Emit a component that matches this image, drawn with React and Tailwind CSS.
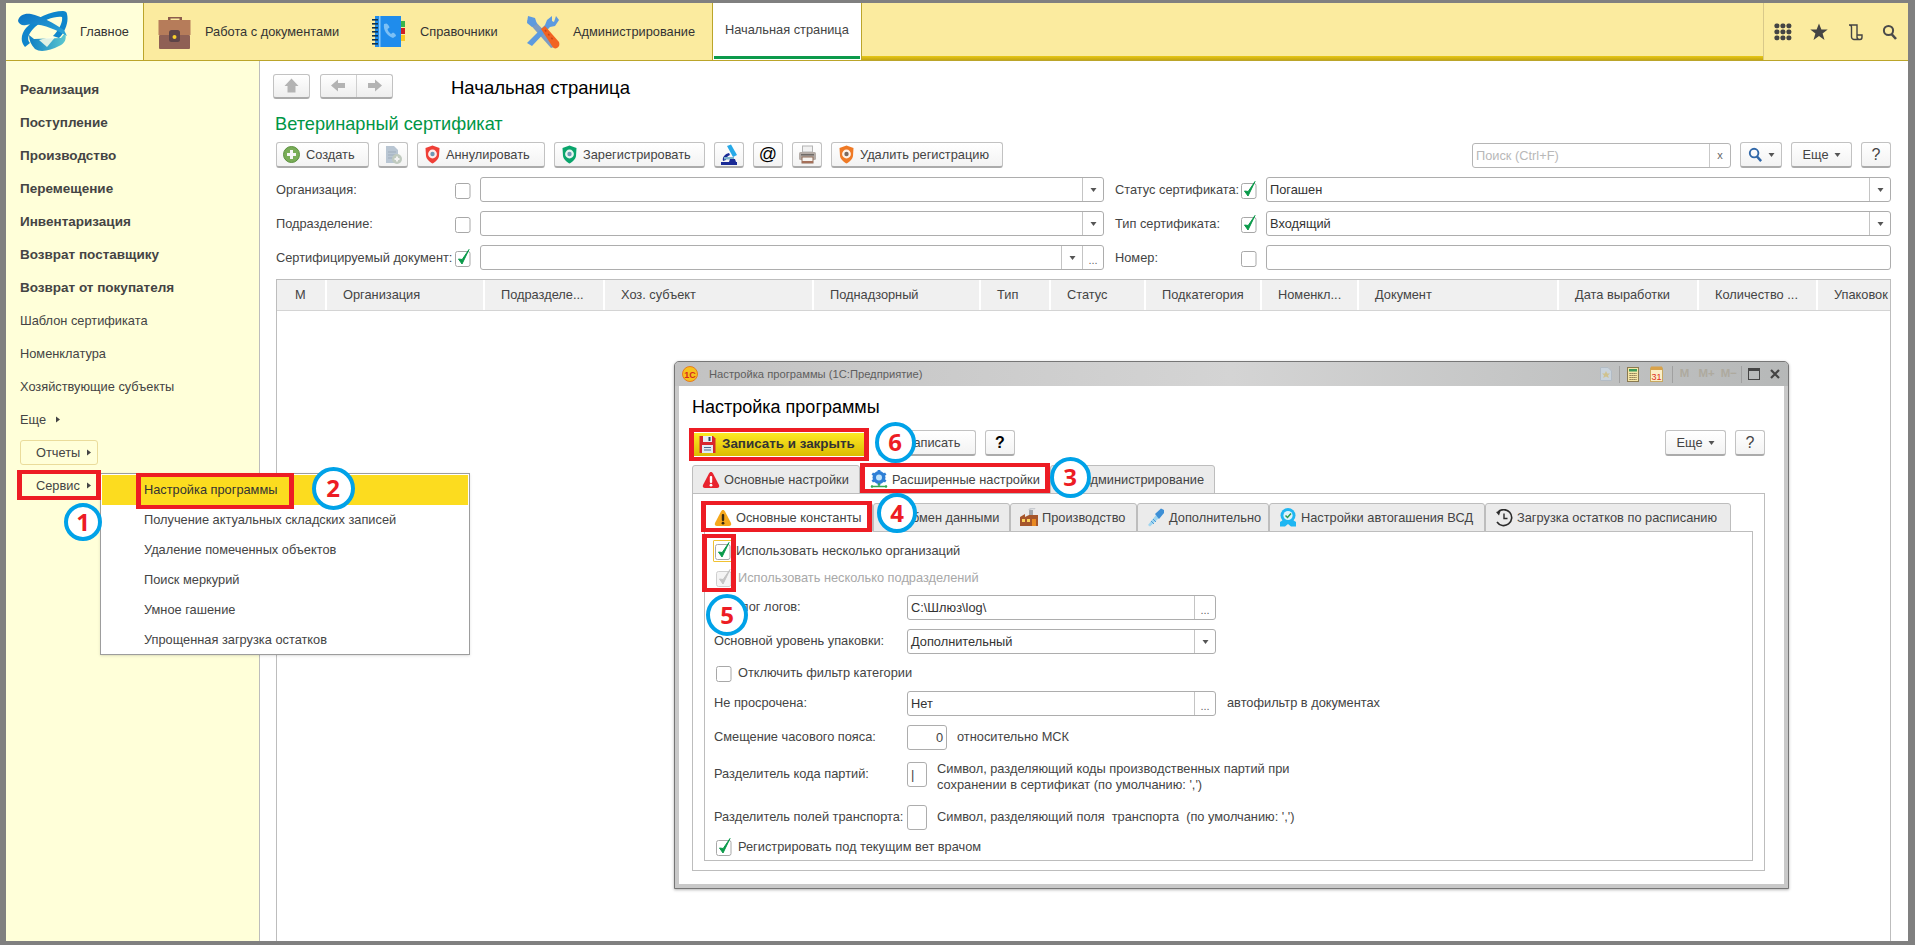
import React from "react";

const Chk = ({ on, dim, className = "" }) => (
  <svg width="17" height="20" viewBox="0 0 17 20" className={`shrink-0 ${className}`}>
    <rect x="0.5" y="3.5" width="14.5" height="15" rx="2" fill={dim ? "#f4f4f4" : "#fff"} stroke={dim ? "#cfcfcf" : "#a8a8a8"} />
    {on && <path d="M3.5 11 L7 16 L14 1.5 L7.2 11.5 Z" fill={dim ? "#c4c4c4" : "#0a9a4a"} stroke={dim ? "#c4c4c4" : "#0a9a4a"} strokeWidth="1" />}
  </svg>
);

const Arrow = ({ dir = "down", className = "" }) => (
  <svg width="7" height="7" viewBox="0 0 7 7" className={`shrink-0 ${className}`}>
    {dir === "down" ? <path d="M0.5 2 H6.5 L3.5 6 Z" fill="#555" /> : <path d="M2 0.5 V6.5 L6 3.5 Z" fill="#444" />}
  </svg>
);

const Field = ({ w, value, btns = [], className = "" }) => (
  <div className={`flex h-[25px] items-stretch rounded-[3px] border border-[#adadad] bg-white ${w || "flex-1"} ${className}`}>
    <div className="flex-1 min-w-0 pl-[3px] leading-[23px] text-[#333] truncate">{value}</div>
    {btns.map((b, i) => (
      <div key={i} className="flex w-[21px] items-center justify-center border-l border-[#c4c4c4]">
        {b === "drop" ? <Arrow /> : <span className="text-[11px] leading-none pt-[5px] text-[#666]">...</span>}
      </div>
    ))}
  </div>
);

const Btn = ({ children, className = "" }) => (
  <div className={`flex h-[26px] shrink-0 items-center rounded-[3px] border border-[#c2c2c2] border-b-2 border-b-[#ababab] bg-linear-to-b from-white to-[#f3f3f3] text-[#444] ${className}`}>
    {children}
  </div>
);

const Shield = ({ c1, c2 }) => (
  <svg width="17" height="19" viewBox="0 0 17 19" className="shrink-0">
    <path d="M8.5 0.5 L15.5 3 L15 11 C14.5 14.5 11 17 8.5 18.5 C6 17 2.5 14.5 2 11 L1.5 3 Z" fill={c1} />
    <circle cx="8.5" cy="9" r="4.4" fill="#fff" opacity="0.9" />
    <circle cx="8.5" cy="9" r="2.2" fill={c2} />
  </svg>
);

const Logo = () => (
  <svg width="50" height="44" viewBox="1 3 50 42" className="shrink-0">
    <defs>
      <linearGradient id="lg" x1="0" y1="0" x2="1" y2="1">
        <stop offset="0" stopColor="#0a72c4" />
        <stop offset="1" stopColor="#2ea8d8" />
      </linearGradient>
      <linearGradient id="lt" x1="0" y1="0" x2="1" y2="0">
        <stop offset="0" stopColor="#0f7fc4" />
        <stop offset="1" stopColor="#5cc8cf" />
      </linearGradient>
    </defs>
    <path d="M12 27 L17 31 L44 30 L48 25 C50 30 48 36 42 38 C34 42 24 45 18 41 C14 37 12 32 12 27 Z" fill="url(#lt)" />
    <path d="M22 32 L40 27 L30 39 Z" fill="#ffffe8" opacity="0.85" />
    <path d="M46 3 C34 3 18 10 9 20 C4 26 3 34 8 39 L13 35 C9 31 12 25 18 19 C26 12 38 8 45 9 C46 14 42 22 36 28 L42 30 C48 24 52 14 50 6 C50 4 48 3 46 3 Z" fill="#0f86cc" />
    <path d="M1 13 C2 7 8 5 14 6 C24 8 38 16 47 22 L50 28 C40 22 22 14 9 17 C5 18 2 16 1 13 Z" fill="url(#lg)" />
  </svg>
);

const Brief = () => (
  <svg width="33" height="34" viewBox="0 0 33 34" className="shrink-0">
    <path d="M10 5 V2 H12 H21 H24 V5 H21.5 V3.6 H12.5 V5 Z" fill="#8c5d4d" />
    <rect x="0.5" y="5" width="32" height="15" fill="#b67c5a" />
    <rect x="1" y="20" width="31" height="14" rx="1" fill="#8f6055" />
    <rect x="11" y="15" width="11" height="12" rx="2.5" fill="#5d4448" />
    <circle cx="16.5" cy="22" r="2" fill="#f7cf2d" />
  </svg>
);

const Book = () => (
  <svg width="33" height="33" viewBox="0 0 33 33" className="shrink-0">
    <rect x="3" y="1" width="26" height="31" fill="#1f8cec" />
    <rect x="7" y="1" width="1.5" height="31" fill="#8cc9f7" />
    {[4, 8, 12, 16, 20, 24, 28].map((y) => <rect key={y} x="0" y={y} width="6" height="1.6" fill="#11344e" />)}
    <rect x="29" y="6" width="4" height="6" fill="#39b54a" />
    <rect x="29" y="13" width="4" height="6" fill="#cf1f25" />
    <rect x="29" y="20" width="4" height="6" fill="#fbc822" />
    <path d="M12 9 C11 15 15 21 21 23 L24 21 C24 19 22 18 21 17.5 L19 19 C17 17.5 16 16 15.5 14 L17.5 12.5 C17 11 16 9 14.5 8.5 Z" fill="#7cc0f5" />
  </svg>
);

const Tools = () => (
  <svg width="34" height="34" viewBox="0 0 34 34" className="shrink-0">
    <path d="M1 6 L5 2 L30 28 L28 32 L25 33 Z" fill="#7c9cc4" />
    <path d="M2 1 L9 3 L11 9 L6 12 L1 8 Z" fill="#5d9adf" />
    <path d="M30 1 L33 5 L29 11 L24 12 L6 31 L1 28 L19 10 L21 5 L26 1 L26 6 L28 7 Z" fill="#5d9adf" />
    <path d="M15 14 L19 11 L33 27 C34 30 33 32 31 33 C29 34 27 33 26 31 Z" fill="#f26322" />
    <path d="M19 15 L28 26" stroke="#c8461a" strokeWidth="1.5" strokeDasharray="2 3" />
  </svg>
);

const Plus = ({ dim }) => (
  <svg width="17" height="17" viewBox="0 0 17 17" className="shrink-0">
    <circle cx="8.5" cy="8.5" r="8" fill={dim ? "#c2ccc2" : "#79ad57"} stroke={dim ? "#b2bab2" : "#5c9040"} />
    <path d="M7 4 H10 V7 H13 V10 H10 V13 H7 V10 H4 V7 H7 Z" fill="#f6f6f6" />
  </svg>
);

const DocAdd = () => (
  <svg width="20" height="20" viewBox="0 0 20 20" className="shrink-0">
    <path d="M3 1 H11 L15 5 V18 H3 Z" fill="#b9c6d3" />
    <path d="M5 7 H13 M5 10 H13 M5 13 H11" stroke="#9fadbc" />
    <circle cx="14" cy="14" r="5" fill="#c0cabf" />
    <path d="M13 11.5 H15 V13 H16.5 V15 H15 V16.5 H13 V15 H11.5 V13 H13 Z" fill="#f2f2f2" />
  </svg>
);

const Micro = () => (
  <svg width="22" height="22" viewBox="0 0 22 22" className="shrink-0">
    <path d="M9 2 L13 0.5 L19 11 L15 13 Z" fill="#26a9e8" />
    <path d="M5 17 C4 13 7 10 11 9 L12 11 C9 12 8 14 8 16 Z" fill="#1a2b96" />
    <rect x="6" y="13" width="10" height="2.5" fill="#7cb2cc" />
    <path d="M3 18 H19 V21 H3 Z" fill="#1a2b96" />
    <path d="M12 15 L17 15 L18 18 H11 Z" fill="#1a2b96" />
  </svg>
);

const Printer = () => (
  <svg width="19" height="19" viewBox="0 0 19 19" className="shrink-0">
    <rect x="4.5" y="1" width="10" height="6" fill="#f1f1f1" stroke="#b4b4b4" />
    <rect x="1" y="7" width="17" height="8" rx="1.5" fill="#b3aba6" />
    <rect x="3" y="9" width="13" height="1.5" fill="#6f6a66" />
    <rect x="4" y="12" width="11" height="6" fill="#f7f4f0" stroke="#8f6c58" />
    <rect x="4" y="16" width="11" height="2" fill="#a5705a" />
  </svg>
);

const HomeIco = () => (
  <svg width="15" height="15" viewBox="0 0 15 15">
    <path d="M7.5 0.5 L14.5 8 H11.5 V14.5 H3.5 V8 H0.5 Z" fill="#b3b3b3" />
  </svg>
);

const ArrowIco = ({ right }) => (
  <svg width="15" height="13" viewBox="0 0 15 13">
    {right ? <path d="M15 6.5 L8 0.5 V4 H1 V9 H8 V12.5 Z" fill="#b3b3b3" /> : <path d="M0 6.5 L7 0.5 V4 H14 V9 H7 V12.5 Z" fill="#b3b3b3" />}
  </svg>
);

const Search = ({ c = "#4a4a4a", s = 16 }) => (
  <svg width={s} height={s} viewBox="0 0 16 16" className="shrink-0">
    <circle cx="6.5" cy="6.5" r="4.6" fill="none" stroke={c} strokeWidth="2" />
    <path d="M9.5 10 L14 15" stroke={c} strokeWidth="2.6" />
  </svg>
);

const Warn = ({ c = "#e8232e", mark = "#fff" }) => (
  <svg width="18" height="18" viewBox="0 0 18 18" className="shrink-0">
    <path d="M9 1 C10 1 10.5 1.6 11 2.5 L17 14 C17.7 15.6 17 17 15 17 H3 C1 17 0.3 15.6 1 14 L7 2.5 C7.5 1.6 8 1 9 1 Z" fill={c} />
    <rect x="7.8" y="5" width="2.4" height="7" rx="1" fill={mark} />
    <circle cx="9" cy="14.2" r="1.4" fill={mark} />
  </svg>
);

const Gear = () => (
  <svg width="18" height="19" viewBox="0 0 18 19" className="shrink-0">
    <circle cx="9" cy="7.5" r="6.5" fill="#2f7fd6" />
    {[0, 60, 120, 180, 240, 300].map((a) => <rect key={a} x="7.6" y="-0.3" width="2.8" height="4" fill="#2f7fd6" transform={`rotate(${a} 9 7.5)`} />)}
    <circle cx="9" cy="7.5" r="3" fill="#bfe2fb" />
    <path d="M1 16.5 H17 M9 13 V17" stroke="#35a853" strokeWidth="1.4" />
    <circle cx="2" cy="16.5" r="1.2" fill="#35a853" /><circle cx="16" cy="16.5" r="1.2" fill="#35a853" />
  </svg>
);

const Factory = () => (
  <svg width="18" height="19" viewBox="0 0 18 19" className="shrink-0">
    <rect x="9" y="2" width="4" height="9" fill="#a3a8ad" />
    <path d="M9 2 C10 0 14 0 15 1" stroke="#c8cbd0" strokeWidth="1.6" fill="none" />
    <path d="M0 9 L5 6 V9 L9 7 H18 V18 H0 Z" fill="#a6562b" />
    <rect x="2" y="11" width="3" height="3" fill="#fbd15b" /><rect x="7" y="11" width="3" height="3" fill="#fbd15b" /><rect x="12" y="11" width="4" height="7" fill="#e98a22" />
  </svg>
);

const Drill = () => (
  <svg width="18" height="19" viewBox="0 0 18 19" className="shrink-0">
    <path d="M1 17 L9 7 L12 10 L3 18.5 Z" fill="#9fd5f0" />
    <path d="M8 6 L14 0.5 L17 2 L17 5 L12 11 Z" fill="#3d8fd6" />
    <path d="M4 13 L7 16 M6 11 L9 14" stroke="#4d9bd6" />
  </svg>
);

const Auto = () => (
  <svg width="18" height="19" viewBox="0 0 18 19" className="shrink-0">
    <circle cx="9" cy="7.5" r="7.5" fill="#1fb6f2" />
    <circle cx="9" cy="7.5" r="4.6" fill="#dff3fc" />
    <path d="M6.5 7.5 L8.5 9.5 L12 5.5" stroke="#2b9b4c" strokeWidth="1.5" fill="none" />
    <path d="M1 14 L4 12 H14 L17 14 V18.5 H12 L9 16 L6 18.5 H1 Z" fill="#1fb6f2" />
  </svg>
);

const Clock = () => (
  <svg width="18" height="18" viewBox="0 0 18 18" className="shrink-0">
    <path d="M3 3 A8 8 0 1 1 2 13" stroke="#2b2b2b" strokeWidth="1.6" fill="none" />
    <path d="M1 3 L5.5 2 L4 6.5 Z" fill="#2b2b2b" />
    <path d="M9 4.5 V9.5 H12.5" stroke="#2b2b2b" strokeWidth="1.4" fill="none" />
  </svg>
);

const Floppy = () => (
  <svg width="17" height="19" viewBox="0 0 17 19" className="shrink-0">
    <path d="M0.5 1 H14 L16.5 3.5 V18 H0.5 Z" fill="#d8262e" />
    <rect x="4" y="1" width="9" height="6" fill="#e9eef5" />
    <rect x="9.5" y="2" width="2" height="4" fill="#23435f" />
    <rect x="3" y="10" width="11" height="8" fill="#e3ebf4" />
    <path d="M5 12.5 H12 M5 15 H12" stroke="#4a6b8e" />
  </svg>
);

const Circle = ({ n, x, y, d = 40 }) => (
  <div
    className="absolute z-20 flex items-center justify-center rounded-full border-[4px] border-[#00a2e8] bg-white font-bold text-[#ed1c24] text-[24px] leading-none"
    style={{ left: x - d / 2 - 6, top: y - d / 2 - 3, width: d, height: d, fontFamily: '"Open Sans","Noto Sans",sans-serif' }}
  >
    {n}
  </div>
);

const RedBox = ({ x, y, x2, y2 }) => (
  <div
    className="absolute z-20 border-x-[5px] border-y-[4px] border-[#ed1c24] pointer-events-none"
    style={{ left: x - 6, top: y - 3, width: x2 - x, height: y2 - y }}
  />
);

const cols = [
  ["М", 50, 18], ["Организация", 158], ["Подразделе...", 120], ["Хоз. субъект", 209], ["Поднадзорный", 167], ["Тип", 70], ["Статус", 95],
  ["Подкатегория", 116], ["Номенкл...", 97], ["Документ", 200], ["Дата выработки", 140], ["Количество ...", 119], ["Упаковок", 74],
];

const side = ["Реализация", "Поступление", "Производство", "Перемещение", "Инвентаризация", "Возврат поставщику", "Возврат от покупателя"];
const side2 = ["Шаблон сертификата", "Номенклатура", "Хозяйствующие субъекты"];
const menu = ["Настройка программы", "Получение актуальных складских записей", "Удаление помеченных объектов", "Поиск меркурий", "Умное гашение", "Упрощенная загрузка остатков"];

const Tab = ({ icon, label, w, active }) => (
  <div
    className={`flex h-[29px] shrink-0 items-center gap-[4px] border border-[#bdbdbd] rounded-t-[3px] pl-[9px] ${active ? "bg-white border-b-white" : "bg-[#ebebeb]"}`}
    style={{ width: w }}
  >
    {icon}
    <span className="whitespace-nowrap">{label}</span>
  </div>
);

const FormRow = ({ label, children, className = "" }) => (
  <div className={`flex items-center pl-[9px] ${className}`}>
    <div className="w-[193px] shrink-0 whitespace-nowrap">{label}</div>
    {children}
  </div>
);

export default function App() {
  return (
    <div
      className="relative h-[945px] w-full overflow-hidden border-t-[3px] border-l-[6px] border-r-[7px] border-b-[4px] border-[#808080] bg-white text-[12.8px] text-[#444]"
      style={{ fontFamily: '"Liberation Sans",Arial,sans-serif' }}
    >
      <div className="flex h-full flex-col">
        {/* top bar */}
        <header className="flex h-[58px] shrink-0 border-b border-[#bba52a] bg-[#fbeb9f] text-[#333]">
          <div className="flex w-[138px] shrink-0 items-center gap-[12px] border-r border-[#bba52a] bg-[#ffffd9] pl-[12px]">
            <Logo />
            <span>Главное</span>
          </div>
          <div className="flex w-[228px] shrink-0 items-center gap-[14px] pl-[14px]"><Brief /><span className="whitespace-nowrap">Работа с документами</span></div>
          <div className="flex w-[154px] shrink-0 items-center gap-[15px]"><Book /><span>Справочники</span></div>
          <div className="flex w-[186px] shrink-0 items-center gap-[13px]"><Tools /><span>Администрирование</span></div>
          <div className="flex w-[150px] shrink-0 flex-col border-x border-[#bba52a] bg-white pl-[12px] pr-0">
            <div className="flex-1 flex items-center pt-[1px] whitespace-nowrap text-[#444]">Начальная страница</div>
            <div className="-ml-[11px] mr-[1px] h-[3px] bg-[#0c9a4b] mb-[1px]" />
          </div>
          <div className="flex flex-1 flex-col justify-end">
            <div className="h-[4px] bg-linear-to-b from-[#e8c816] to-[#c4a614]" />
          </div>
          <div className="flex w-[145px] shrink-0 items-center gap-[18px] border-l border-[#d8c88a] pl-[10px]">
            <svg width="18" height="18" viewBox="0 0 18 18" className="shrink-0">
              {[0, 6, 12].map((x) => [0, 6, 12].map((y) => <rect key={`${x}${y}`} x={x + 0.5} y={y + 0.5} width="4.8" height="4.8" rx="1.8" fill="#444" />))}
            </svg>
            <svg width="18" height="18" viewBox="0 0 18 18" className="shrink-0"><path d="M9 0.5 L11.4 6.5 H17.7 L12.6 10.4 L14.5 17 L9 13 L3.5 17 L5.4 10.4 L0.3 6.5 H6.6 Z" fill="#444" /></svg>
            <svg width="18" height="18" viewBox="0 0 18 18" className="shrink-0" fill="none" stroke="#444" strokeWidth="1.4"><path d="M3 2 C4.5 2 5.5 3 5.5 4 V14 C5.5 15.5 7 16.5 8 16.5 H14 C15.5 16.5 16 15.5 16 14 V12 H11 V2 H3 Z M11 12 V14 C11 15.5 12 16.5 13.5 16.5" /></svg>
            <Search />
          </div>
        </header>

        <div className="flex min-h-0 flex-1">
          {/* sidebar */}
          <aside className="w-[254px] shrink-0 border-r border-[#bdbdbd] bg-[#ffffd9] pt-[12px] pl-[14px] text-[#444]">
            {side.map((s) => <div key={s} className="h-[33px] leading-[33px] text-[13.5px] font-bold">{s}</div>)}
            {side2.map((s) => <div key={s} className="h-[33px] leading-[33px]">{s}</div>)}
            <div className="flex h-[33px] items-center gap-[8px]">Еще <Arrow dir="right" /></div>
            <div className="mt-[4px] flex h-[25px] w-[78px] items-center gap-[5px] rounded-[3px] border border-[#eadc9b] pl-[15px]">Отчеты <Arrow dir="right" /></div>
            <div className="mt-[8px] flex h-[25px] w-[78px] items-center gap-[5px] pl-[16px]">Сервис <Arrow dir="right" /></div>
          </aside>

          {/* main */}
          <main className="flex min-w-0 flex-1 flex-col pl-[16px] pr-[17px]">
            <div className="mt-[13px] flex h-[24px] shrink-0 items-center -ml-[3px]">
              <div className="flex h-[25px] w-[37px] items-center justify-center rounded-[3px] border border-[#c2c2c2] border-b-2 border-b-[#ababab] bg-linear-to-b from-white to-[#eeeeee]"><HomeIco /></div>
              <div className="ml-[10px] flex h-[25px] w-[73px] rounded-[3px] border border-[#c2c2c2] border-b-2 border-b-[#ababab] bg-linear-to-b from-white to-[#eeeeee]">
                <div className="flex flex-1 items-center justify-center border-r border-[#cfcfcf]"><ArrowIco /></div>
                <div className="flex flex-1 items-center justify-center"><ArrowIco right /></div>
              </div>
              <div className="ml-[58px] pt-[3px] text-[18.5px] text-black whitespace-nowrap">Начальная страница</div>
            </div>
            <div className="mt-[14px] h-[24px] shrink-0 text-[18.2px] leading-[24px] text-[#009646] -ml-[1px]">Ветеринарный сертификат</div>

            <div className="mt-[6px] flex h-[26px] shrink-0 items-center gap-[9px]">
              <Btn className="w-[93px] gap-[6px] pl-[6px]"><Plus />Создать</Btn>
              <Btn className="w-[30px] justify-center"><DocAdd /></Btn>
              <Btn className="w-[128px] gap-[5px] pl-[6px]"><Shield c1="#ef3f37" c2="#6f97b4" />Аннулировать</Btn>
              <Btn className="w-[151px] gap-[5px] pl-[6px]"><Shield c1="#0aa56c" c2="#6f97b4" />Зарегистрировать</Btn>
              <Btn className="w-[30px] justify-center"><Micro /></Btn>
              <Btn className="w-[30px] justify-center text-[18px] text-black">@</Btn>
              <Btn className="w-[30px] justify-center"><Printer /></Btn>
              <Btn className="w-[172px] gap-[5px] pl-[6px]"><Shield c1="#ef7a26" c2="#7a6a60" />Удалить регистрацию</Btn>
              <div className="flex-1" />
              <div className="flex h-[25px] w-[259px] rounded-[3px] border border-[#b5b5b5]">
                <div className="flex-1 pl-[3px] leading-[23px] text-[#b8b8b8]">Поиск (Ctrl+F)</div>
                <div className="flex w-[21px] items-center justify-center border-l border-[#c9c9c9] text-[11px] text-[#666]">x</div>
              </div>
              <Btn className="w-[42px] justify-center gap-[5px]"><Search c="#3067a8" s={15} /><Arrow /></Btn>
              <Btn className="w-[61px] justify-center gap-[5px]">Еще <Arrow /></Btn>
              <Btn className="w-[30px] justify-center text-[16px]">?</Btn>
            </div>

            <div className="mt-[9px] flex shrink-0 flex-col gap-[9px]">
              <div className="flex items-center">
                <div className="w-[179px] shrink-0">Организация:</div><Chk /><div className="w-[8px]" />
                <Field w="w-[624px]" btns={["drop"]} />
                <div className="ml-[11px] w-[126px] shrink-0 whitespace-nowrap">Статус сертификата:</div><Chk on /><div className="w-[8px]" />
                <Field value="Погашен" btns={["drop"]} />
              </div>
              <div className="flex items-center">
                <div className="w-[179px] shrink-0">Подразделение:</div><Chk /><div className="w-[8px]" />
                <Field w="w-[624px]" btns={["drop"]} />
                <div className="ml-[11px] w-[126px] shrink-0 whitespace-nowrap">Тип сертификата:</div><Chk on /><div className="w-[8px]" />
                <Field value="Входящий" btns={["drop"]} />
              </div>
              <div className="flex items-center">
                <div className="w-[179px] shrink-0 whitespace-nowrap">Сертифицируемый документ:</div><Chk on /><div className="w-[8px]" />
                <Field w="w-[624px]" btns={["drop", "dots"]} />
                <div className="ml-[11px] w-[126px] shrink-0">Номер:</div><Chk /><div className="w-[8px]" />
                <Field />
              </div>
            </div>

            <div className="mt-[9px] flex min-h-0 flex-1 flex-col border-x border-t border-[#bdbdbd]">
              <div className="flex h-[31px] shrink-0 border-b border-[#d4d4d4] bg-[#f0f0f0]">
                {cols.map(([t, w, p], i) => (
                  <div key={t} className={`flex shrink-0 items-center overflow-hidden whitespace-nowrap ${i < cols.length - 1 ? "border-r-2 border-white" : ""}`} style={{ width: i === cols.length - 1 ? w - 2 : w, paddingLeft: p || 16 }}>{t}</div>
                ))}
              </div>
              <div className="flex-1" />
            </div>
          </main>
        </div>
      </div>

      {/* popup menu */}
      <div className="absolute left-[94px] top-[470px] flex h-[182px] w-[370px] flex-col border border-[#9d9d9d] bg-white p-[1px] shadow-sm">
        {menu.map((m, i) => (
          <div key={m} className={`flex h-[30px] shrink-0 items-center pl-[42px] whitespace-nowrap ${i === 0 ? "bg-[#fcdc1f] text-[#333]" : ""}`}>{m}</div>
        ))}
      </div>

      {/* dialog */}
      <div className="absolute left-[668px] top-[358px] flex h-[528px] w-[1115px] flex-col rounded-t-[5px] border border-[#767676] bg-[#c9c9c9] pb-[4px] shadow-[0_1px_3px_rgba(0,0,0,0.3)]">
        <div className="flex h-[24px] shrink-0 items-center rounded-t-[4px] bg-linear-to-r from-[#c2c2c2] via-[#d4d4d4] to-[#b6b8b8] pl-[7px] pr-[8px]">
          <svg width="16" height="16" viewBox="0 0 16 16" className="shrink-0">
            <circle cx="8" cy="8" r="7.5" fill="#f7c11c" stroke="#e57b20" />
            <text x="8" y="11.5" textAnchor="middle" fontSize="9" fontWeight="700" fill="#d62a1e" fontFamily="Liberation Sans">1C</text>
          </svg>
          <span className="ml-[11px] whitespace-nowrap text-[11.2px] text-[#5e5e5e]">Настройка программы (1С:Предприятие)</span>
          <div className="flex-1" />
          <div className="flex items-center">
            <svg width="12" height="14" viewBox="0 0 12 14" className="shrink-0"><path d="M0.5 0.5 H8 L11.5 4 V13.5 H0.5 Z" fill="#c9d3dc" stroke="#b3bcc5" /><path d="M6 4 L7.2 6.5 H10 L8 8.3 L8.8 11 L6 9.6 L3.2 11 L4 8.3 L2 6.5 H4.8 Z" fill="#cfc28f" /></svg>
            <div className="ml-[7px] h-[17px] w-px bg-[#a0a0a0]" />
            <svg width="12" height="15" viewBox="0 0 12 15" className="ml-[7px] shrink-0"><rect x="0.5" y="0.5" width="11" height="14" fill="#f5e6a6" stroke="#8a7a50" /><rect x="2" y="2" width="8" height="2.5" fill="#3e9a5a" /><path d="M2.5 6.5 H9.5 M2.5 8.5 H9.5 M2.5 10.5 H9.5 M2.5 12.5 H9.5" stroke="#6a5a3a" strokeDasharray="1.2 0.8" /></svg>
            <svg width="13" height="16" viewBox="0 0 13 16" className="ml-[11px] shrink-0"><rect x="0.5" y="2" width="12" height="13.5" fill="#fbefc8" stroke="#c8a860" /><rect x="1" y="0.5" width="11" height="3.5" fill="#d9a24a" /><text x="6.5" y="13.5" textAnchor="middle" fontSize="9" fill="#e0301e" fontFamily="Liberation Sans">31</text></svg>
            <div className="ml-[9px] h-[17px] w-px bg-[#a0a0a0]" />
            <span className="ml-[7px] text-[11.5px] font-bold text-[#aeaa9f]">M</span>
            <span className="ml-[9px] text-[11.5px] font-bold text-[#aeaa9f]">M+</span>
            <span className="ml-[6px] text-[11.5px] font-bold text-[#aeaa9f]">M−</span>
            <div className="ml-[4px] h-[17px] w-px bg-[#a0a0a0]" />
            <div className="ml-[6px] h-[12px] w-[12px] border border-t-[3px] border-[#444]" />
            <svg width="10" height="10" viewBox="0 0 10 10" className="ml-[10px]"><path d="M1 1 L9 9 M9 1 L1 9" stroke="#444" strokeWidth="2.2" /></svg>
          </div>
        </div>

        <div className="mx-[4px] flex min-h-0 flex-1 flex-col bg-white pl-[13px] pr-[19px] pb-[13px]">
          <div className="mt-[9px] h-[24px] shrink-0 text-[18px] leading-[24px] text-black font-medium whitespace-nowrap">Настройка программы</div>
          <div className="mt-[11px] flex h-[26px] shrink-0 items-center">
            <div className="ml-[2px] mt-[3px] flex h-[23px] w-[170px] shrink-0 items-center gap-[6px] self-start bg-linear-to-b from-[#fdea22] to-[#dcbb00] pl-[5px] text-[13.4px] font-bold text-[#333]"><Floppy />Записать и закрыть</div>
            <Btn className="ml-[14px] w-[98px] justify-center pl-[12px]">Записать</Btn>
            <Btn className="ml-[9px] w-[30px] justify-center text-[16px] font-bold text-black">?</Btn>
            <div className="flex-1" />
            <Btn className="w-[61px] justify-center gap-[5px]">Еще <Arrow /></Btn>
            <Btn className="ml-[9px] w-[30px] justify-center text-[16px]">?</Btn>
          </div>

          <div className="mt-[10px] flex h-[28px] shrink-0 items-end">
            <Tab w={168} icon={<Warn />} label="Основные настройки" />
            <Tab w={190} active icon={<Gear />} label="Расширенные настройки" />
            <Tab w={165} icon={null} label={<span className="pl-[22px]">Администрирование</span>} />
          </div>
          <div className="-mt-px flex min-h-0 flex-1 flex-col border border-[#bdbdbd] px-[11px] pt-[10px] pb-[9px]">
            <div className="z-10 flex h-[28px] shrink-0 items-end">
              <Tab w={169} active icon={<Warn c="#f5a81c" mark="#3a2b10" />} label="Основные константы" />
              <Tab w={137} icon={null} label={<span className="pl-[19px]">Обмен данными</span>} />
              <Tab w={127} icon={<Factory />} label="Производство" />
              <Tab w={132} icon={<Drill />} label="Дополнительно" />
              <Tab w={216} icon={<Auto />} label="Настройки автогашения ВСД" />
              <Tab w={246} icon={<Clock />} label="Загрузка остатков по расписанию" />
            </div>
            <div className="-mt-px flex min-h-0 flex-1 flex-col border border-[#bdbdbd] pt-[7px] leading-none text-[#444]">
              <div className="flex h-[24px] items-center pl-[8px] gap-[3px]">
                <div className="flex h-[22px] w-[20px] items-center justify-center border border-[#f1c232] rounded-[1px]"><Chk on /></div>
                <span>Использовать несколько организаций</span>
              </div>
              <div className="mt-[3px] flex h-[24px] items-center pl-[11px] gap-[3px] text-[#a8a8a8]">
                <Chk on dim /><span className="pl-[2px]">Использовать несколько подразделений</span>
              </div>
              <FormRow className="mt-[5px]" label="Каталог логов:"><Field w="w-[309px]" value="C:\Шлюз\log\" btns={["dots"]} /></FormRow>
              <FormRow className="mt-[9px]" label="Основной уровень упаковки:"><Field w="w-[309px]" value="Дополнительный" btns={["drop"]} /></FormRow>
              <div className="mt-[7px] flex h-[24px] items-center pl-[11px] gap-[5px]"><Chk /><span>Отключить фильтр категории</span></div>
              <FormRow className="mt-[6px]" label="Не просрочена:">
                <Field w="w-[309px]" value="Нет" btns={["dots"]} />
                <span className="ml-[11px] whitespace-nowrap">автофильтр в документах</span>
              </FormRow>
              <FormRow className="mt-[9px]" label="Смещение часового пояса:">
                <div className="h-[25px] w-[40px] rounded-[3px] border border-[#adadad] pr-[3px] text-right leading-[23px]">0</div>
                <span className="ml-[10px] whitespace-nowrap">относительно МСК</span>
              </FormRow>
              <FormRow className="mt-[6px]" label="Разделитель кода партий:">
                <div className="h-[25px] w-[20px] rounded-[3px] border border-[#adadad] pl-[3px] leading-[23px]">|</div>
                <div className="ml-[10px] mt-[5px] whitespace-nowrap leading-[16px]">Символ, разделяющий коды производственных партий при<br />сохранении в сертификат (по умолчанию: ',')</div>
              </FormRow>
              <FormRow className="mt-[12px]" label="Разделитель полей транспорта:">
                <div className="h-[25px] w-[20px] rounded-[3px] border border-[#adadad]" />
                <div className="ml-[10px] whitespace-pre">Символ, разделяющий поля  транспорта  (по умолчанию: ',')</div>
              </FormRow>
              <div className="mt-[5px] flex h-[24px] items-center pl-[11px] gap-[5px]"><Chk on /><span>Регистрировать под текущим вет врачом</span></div>
            </div>
          </div>
        </div>
      </div>

      {/* annotations */}
      <RedBox x={17} y={470} x2={101} y2={500} />
      <RedBox x={136} y={473} x2={294} y2={509} />
      <RedBox x={689} y={428} x2={869} y2={461} />
      <RedBox x={860} y={463} x2={1050} y2={493} />
      <RedBox x={701} y={501} x2={872} y2={532} />
      <RedBox x={702} y={534} x2={736} y2={592} />
      <Circle n="1" x={83} y={522} d={38} />
      <Circle n="2" x={333} y={488} d={43} />
      <Circle n="3" x={1070} y={477} d={41} />
      <Circle n="4" x={897} y={513} d={40} />
      <Circle n="5" x={727} y={615} d={42} />
      <Circle n="6" x={895} y={442} d={41} />
    </div>
  );
}
